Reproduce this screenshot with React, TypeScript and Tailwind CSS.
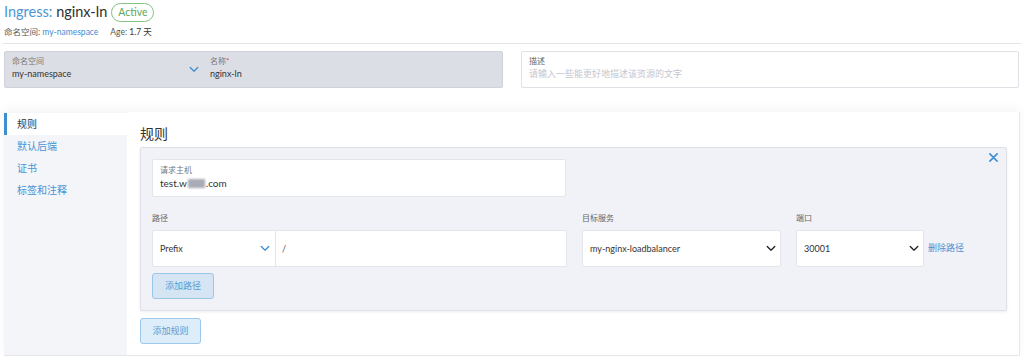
import React from "react";

const Chevron = ({ className }: { className: string }) => (
  <svg viewBox="0 0 12 8" className={className} fill="none" stroke="currentColor" strokeWidth="1.6" strokeLinecap="round" strokeLinejoin="round">
    <path d="M1.5 1.5 6 6l4.5-4.5" />
  </svg>
);

const navItems = ["规则", "默认后端", "证书", "标签和注释"];

const App = () => {
  return (
    <div className="w-[1024px] h-[358px] overflow-hidden bg-white text-[#333] font-['Lato','Noto_Sans_CJK_SC',sans-serif]">
      {/* header */}
      <header className="mx-[3px] h-[44px] border-b border-[#e3e4ea] pl-[1px] pt-[2px]">
        <div className="flex items-center gap-[4px] h-[20px]">
          <h1 className="text-[14.5px] leading-[20px]">
            <span className="text-[#4a97d6]">Ingress:</span> <span className="text-[#2f2f2f]">nginx-ln</span>
          </h1>
          <span className="h-[19px] px-[6px] rounded-full border border-[#86c385] text-[#5aa85a] text-[10.5px] leading-[17px]">
            Active
          </span>
        </div>
        <div className="flex items-center gap-[12px] text-[8.5px] mt-[4px] h-[12px]">
          <span className="text-[#555]">
            命名空间: <span className="text-[#3f8ed2]">my-namespace</span>
          </span>
          <span className="text-[#555]">
            Age: <span className="text-[#333]">1.7 天</span>
          </span>
        </div>
      </header>

      {/* basic fields */}
      <div className="flex gap-[18px] pl-[4px] pr-[5px] mt-[7px]">
        <div className="flex w-[499px] h-[37px] bg-[#dcdee6] border border-[#cfd2dc] rounded-[2px]">
          <div className="relative w-[201px] pl-[7px] pt-[4px]">
            <div className="text-[8px] leading-[11px] text-[#777]">命名空间</div>
            <div className="text-[9px] leading-[14px] text-[#333]">my-namespace</div>
            <Chevron className="absolute right-[7px] top-[14px] w-[10px] h-[7px] text-[#3f8ed2]" />
          </div>
          <div className="flex-1 pl-[4px] pt-[4px]">
            <div className="text-[8px] leading-[11px] text-[#777]">
              名称<span className="text-[#e04848]">*</span>
            </div>
            <div className="text-[9px] leading-[14px] text-[#333]">nginx-ln</div>
          </div>
        </div>
        <div className="w-[498px] h-[37px] bg-white border border-[#dfe1e7] rounded-[2px] pl-[7px] pt-[4px]">
          <div className="text-[8px] leading-[11px] text-[#666]">描述</div>
          <div className="text-[9px] leading-[14px] text-[#c3c6cf]">请输入一些能更好地描述该资源的文字</div>
        </div>
      </div>

      {/* rules panel */}
      <div className="flex ml-[4px] w-[1016px] mt-[24px] h-[244px] border-r border-b border-[#e6e7ec] shadow-[0_-4px_10px_rgba(0,0,0,0.04)]">
        <nav className="w-[123px] bg-[#f4f5f9] text-[10px] pt-[1px]">
          {navItems.map((item, i) => (
            <div
              key={item}
              className={
                i === 0
                  ? "h-[22px] flex items-center pl-[10px] bg-white border-l-[3px] border-[#3f8ed2] text-[#333]"
                  : "h-[22px] flex items-center pl-[13px] text-[#4a93d3]"
              }
            >
              {item}
            </div>
          ))}
        </nav>

        <main className="flex-1 bg-white pl-[13px] pr-[12px] pt-[12px]">
          <h2 className="text-[14px] leading-[20px] text-[#333] mb-[3px]">规则</h2>

          <div className="relative bg-[#f1f2f7] border border-[#dfe1e8] rounded-[2px] shadow-[0_1px_3px_rgba(0,0,0,0.08)] px-[11px] pt-[11px] pb-[11px]">
            <svg viewBox="0 0 10 10" className="absolute right-[8px] top-[5px] w-[9px] h-[9px] text-[#3f8ed2]" stroke="currentColor" strokeWidth="1.8" strokeLinecap="round">
              <path d="M1 1l8 8M9 1 1 9" />
            </svg>

            <div className="w-[414px] h-[38px] bg-white border border-[#e3e5eb] rounded-[2px] pl-[7px] pt-[5px]">
              <div className="text-[8px] leading-[11px] text-[#777]">请求主机</div>
              <div className="text-[10px] leading-[15px] text-[#333] flex items-center">
                test.w
                <span className="inline-block w-[17px] h-[9px] bg-[#a9abb5] blur-[1px] mx-[1px]" />
                .com
              </div>
            </div>

            <div className="flex items-start mt-[15px]">
              <div className="w-[415px]">
                <div className="text-[8px] leading-[12px] text-[#666] mb-[6px]">路径</div>
                <div className="flex h-[37px] bg-white border border-[#e3e5eb] rounded-[2px]">
                  <div className="w-[123px] border-r border-[#e3e5eb] flex items-center justify-between pl-[7px] pr-[5px] text-[9px] text-[#333]">
                    Prefix
                    <Chevron className="w-[10px] h-[7px] text-[#3f8ed2]" />
                  </div>
                  <div className="flex-1 flex items-center pl-[6px] text-[9px] text-[#555]">/</div>
                </div>
              </div>

              <div className="w-[199px] ml-[15px]">
                <div className="text-[8px] leading-[12px] text-[#666] mb-[6px]">目标服务</div>
                <div className="h-[37px] bg-white border border-[#e3e5eb] rounded-[2px] flex items-center justify-between pl-[7px] pr-[4px] text-[9px] text-[#333]">
                  my-nginx-loadbalancer
                  <Chevron className="w-[10px] h-[7px] text-[#222]" />
                </div>
              </div>

              <div className="w-[128px] ml-[15px]">
                <div className="text-[8px] leading-[12px] text-[#666] mb-[6px]">端口</div>
                <div className="h-[37px] bg-white border border-[#e3e5eb] rounded-[2px] flex items-center justify-between pl-[7px] pr-[4px] text-[9px] text-[#333]">
                  30001
                  <Chevron className="w-[10px] h-[7px] text-[#222]" />
                </div>
              </div>

              <span className="ml-[4px] mt-[30px] text-[9px] leading-[12px] text-[#4a93d3]">删除路径</span>
            </div>

            <button className="mt-[6px] w-[62px] h-[26px] bg-[#d5e5f3] border border-[#9cc6e8] rounded-[3px] text-[9px] text-[#5a9bd2]">
              添加路径
            </button>
          </div>

          <button className="mt-[7px] w-[61px] h-[26px] bg-[#ddeefa] border border-[#9cc9eb] rounded-[3px] text-[9px] text-[#5a9bd2]">
            添加规则
          </button>
        </main>
      </div>
    </div>
  );
};

export default App;
